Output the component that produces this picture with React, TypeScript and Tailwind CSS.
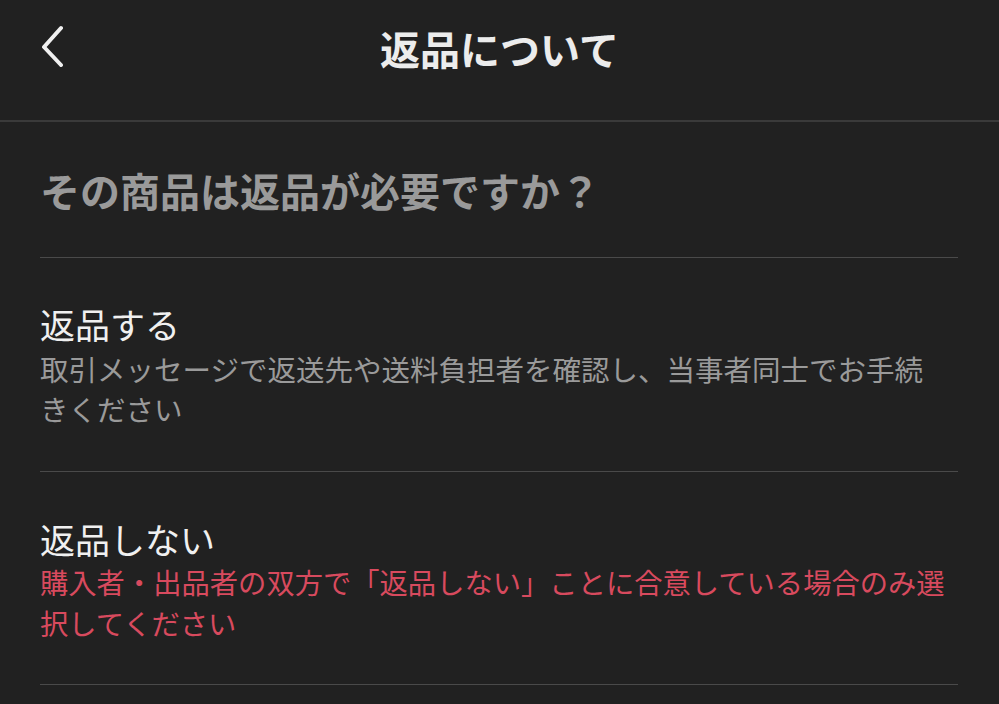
export default function App() {
  return (
    <div
      className="min-h-[704px] w-full bg-[#212121] text-[#efefef]"
      style={{ fontFamily: '"Noto Sans CJK JP", "Noto Sans", sans-serif' }}
    >
      <header className="h-[122px] border-b-2 border-[#3a3a3a]">
        <div className="relative flex h-[96px] items-center justify-center">
          <button className="absolute left-[36px] top-[22px] flex h-[48px] w-[32px] items-center justify-center">
            <svg width="26" height="42" viewBox="0 0 26 42" fill="none">
              <path
                d="M22 3 L5 22 L22 40"
                stroke="#f0f0f0"
                strokeWidth="4"
                strokeLinecap="round"
                strokeLinejoin="round"
              />
            </svg>
          </button>
          <h1 className="text-[40px] leading-[48px] font-bold text-[#ececec]">返品について</h1>
        </div>
      </header>

      <main className="pl-[40px] pr-[41px]">
        <div className="border-b border-[#4a4a4a] pt-[44px] pb-[43px]">
          <p className="text-[40px] leading-[48px] font-bold text-[#9a9a9a]">
            その商品は返品が必要ですか？
          </p>
        </div>

        <div className="border-b border-[#4a4a4a] pt-[44px] pb-[42px]">
          <p className="text-[35px] leading-[44px] text-[#f0f0f0]">返品する</p>
          <p className="mt-[3px] max-w-[900px] text-[28.5px] leading-[40px] text-[#9a9a9a]">
            取引メッセージで返送先や送料負担者を確認し、当事者同士でお手続きください
          </p>
        </div>

        <div className="border-b border-[#4a4a4a] pt-[45px] pb-[41px]">
          <p className="text-[35px] leading-[44px] text-[#f0f0f0]">返品しない</p>
          <p className="text-[28.3px] leading-[41px] text-[#d84a5e]">
            購入者・出品者の双方で「返品しない」ことに合意している場合のみ選択してください
          </p>
        </div>
      </main>
    </div>
  );
}
